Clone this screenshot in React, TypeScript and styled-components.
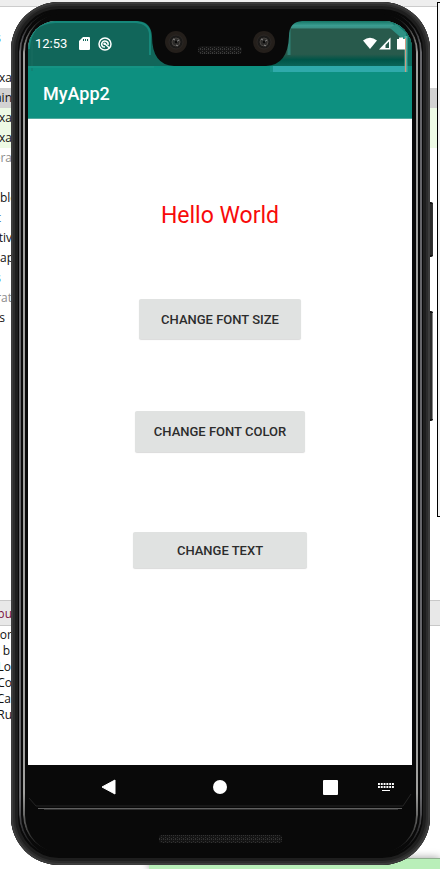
import React, { useState } from "react";
import styled, { createGlobalStyle } from "styled-components";

const GlobalStyle = createGlobalStyle`
  *, *::before, *::after { box-sizing: border-box; }
  body { margin: 0; background: #fff; font-family: Roboto, sans-serif; }
  button { font-family: inherit; border: 0; padding: 0; cursor: pointer; }
`;

const Desktop = styled.div`
  display: grid;
  grid-template: minmax(100vh, auto) / minmax(0, 1fr);
  overflow: hidden;
`;

/* ---------- editor window behind the emulator ---------- */

const Editor = styled.div`
  grid-area: 1 / 1;
  position: relative;
  display: flex;
  flex-direction: column;
  font: 12px/20px "Open Sans", "Noto Sans", sans-serif;
  color: #111;
`;

const TopStrip = styled.div`
  height: 7px;
  flex: none;
  background: #eee;
  border-bottom: 1px solid #ccc;
`;

const Files = styled.ul`
  flex: 1;
  margin: 0;
  padding: 21px 0 0;
  list-style: none;
`;

const Line = styled.li<{ $fill?: string; $ink?: string }>`
  height: 20px;
  background: ${(p) => p.$fill ?? "transparent"};
  color: ${(p) => p.$ink ?? "inherit"};
`;

const Visible = styled.span<{ $width?: number }>`
  display: flex;
  justify-content: ${(p) => (p.$width ? "flex-end" : "flex-start")};
  width: ${(p) => p.$width ?? 12}px;
  white-space: pre;
`;

const OutputHeader = styled.div`
  height: 26px;
  flex: none;
  background: #e8e8e8;
  border: solid #c8c8c8;
  border-width: 1px 0;
  line-height: 26px;
  color: #7a1040;
`;

const Output = styled.ul`
  height: 232px;
  flex: none;
  margin: 0;
  padding: 1px 0 0;
  list-style: none;
  line-height: 16px;
`;

const StatusStrip = styled.div`
  height: 11px;
  flex: none;
  margin-left: 149px;
  background: #b9efb9;
  border-top: 1px solid #8fae8f;
  box-shadow: 0 0 8px rgba(0, 0, 0, 0.4);
`;

const SidePanel = styled.div`
  position: absolute;
  top: 2px;
  right: -1px;
  width: 4px;
  height: 515px;
  background: #f4f4f4;
  border: 1px solid #000;
`;

/* ---------- device ---------- */

const Device = styled.div`
  grid-area: 1 / 1;
  position: relative;
  display: flex;
  flex-direction: column;
  margin: 2px 10px 4px 11px;
  padding: 19px 18px 0 17px;
  border-radius: 48px;
  background: #090909;
  box-shadow: inset 0 0 0 2px #3c3c3c, inset 0 0 0 4px #2c2c2c,
    inset 0 0 0 7px #1e1e1e;
`;

const Rim = styled.div<{ $inset: number; $tone: string; $radius: number }>`
  position: absolute;
  inset: ${(p) => p.$inset}px;
  border: solid ${(p) => p.$tone};
  border-width: 0 2px;
  border-radius: ${(p) => p.$radius}px;
  mask-image: linear-gradient(
    transparent,
    #000 40px,
    #000 calc(100% - 60px),
    transparent
  );
  pointer-events: none;
`;

const SideKey = styled.div<{ $top: number; $length: number; $edge: string }>`
  position: absolute;
  top: ${(p) => p.$top}px;
  right: -3px;
  width: 3px;
  height: ${(p) => p.$length}px;
  background: #2b2b2b;
  border: solid #111;
  border-width: 2px 0;
  border-radius: 0 2px 2px 0;
  box-shadow: inset -1px 0 ${(p) => p.$edge};
`;

const Screen = styled.div`
  flex: 1;
  position: relative;
  display: flex;
  flex-direction: column;
  overflow: hidden;
  border-radius: 28px 28px 0 0;
  background: #fff;
`;

const StatusBar = styled.header`
  height: 45px;
  flex: none;
  display: flex;
  align-items: center;
  padding: 0 7px;
  background: #11665a;
  color: #fff;
  font-size: 13px;
  line-height: 16px;
`;

const StatusIcons = styled.div`
  display: flex;
  align-items: center;
  gap: 8px;
  margin-left: 12px;
`;

const LeftGlow = styled.svg`
  position: absolute;
  top: 0;
  left: 0;
`;

const Notch = styled.svg`
  position: absolute;
  top: 0;
  left: 50%;
  transform: translateX(-50%);
`;

const Glare = styled.svg`
  position: absolute;
  top: 0;
  right: 0;
`;

const AppBar = styled.div`
  height: 53px;
  flex: none;
  display: flex;
  align-items: center;
  padding: 3px 15px 0;
  background: #0d9080;
  border-bottom: 1px solid #51aa9f;
`;

const Title = styled.h1`
  margin: 0;
  color: #fff;
  font-size: 18px;
  line-height: 24px;
  font-weight: 500;
`;

const Main = styled.main`
  flex: 1;
  display: flex;
  flex-direction: column;
  align-items: center;
  padding-top: 83px;
`;

const Greeting = styled.p<{ $large: boolean; $blue: boolean }>`
  margin: 0 0 69px;
  color: ${(p) => (p.$blue ? "#1a56f0" : "#f80a0a")};
  font-size: ${(p) => (p.$large ? 32 : 23)}px;
  line-height: 28px;
`;

const Action = styled.button<{ $width: number; $height: number; $gap: number }>`
  width: ${(p) => p.$width}px;
  height: ${(p) => p.$height}px;
  flex: none;
  margin-bottom: ${(p) => p.$gap}px;
  padding-top: 1px;
  border-radius: 2px;
  background: #e0e2e1;
  box-shadow: 0 1px 1px rgba(0, 0, 0, 0.15);
  color: #2c2c2c;
  font-size: 13px;
  line-height: 16px;
  font-weight: 500;
  text-transform: uppercase;
`;

const NavBar = styled.nav`
  height: 44px;
  flex: none;
  display: grid;
  grid-template-columns:
    minmax(0, 26fr) repeat(3, minmax(0, 111fr))
    minmax(0, 26fr);
  align-items: center;
  justify-items: center;
  background: #090909;

  button:first-child {
    grid-column: 2;
  }
  button:last-child {
    justify-self: end;
    margin-right: 18px;
  }
`;

const NavButton = styled.button`
  display: flex;
  background: none;
  color: #fff;
`;

const Chin = styled.div`
  position: relative;
  height: 56px;
  flex: none;
  display: flex;
  justify-content: center;
  align-items: center;
  padding-top: 4px;
`;

const GlassEdge = styled.svg`
  position: absolute;
  top: -27px;
  left: 0;
  width: 100%;
  height: 30px;
`;

const SpeakerArt = styled.svg`
  display: block;
`;

const files = [
  { text: "s", ink: "#2f8fe0", width: 1 },
  { text: "" },
  { text: "exa", width: 12 },
  { text: "ain", fill: "#d2d2d2", width: 12 },
  { text: "exa", fill: "#edfae5", width: 12 },
  { text: "exa", fill: "#edfae5", width: 12 },
  { text: "era", ink: "#8c8c8c", width: 12 },
  { text: "" },
  { text: "ble" },
  { text: "t", ink: "#3574a8", width: 1 },
  { text: "tiv", width: 12 },
  { text: "ap" },
  { text: "s", ink: "#2f8fe0", width: 1 },
  { text: "rat", ink: "#8c8c8c", width: 12 },
  { text: "s", width: 5 },
];

const output = [
  { text: "tor", width: 12 },
  { text: "b", width: 10 },
  { text: "Lo", width: 11 },
  { text: "Co", width: 12 },
  { text: "Ca", width: 11 },
  { text: "Ru", width: 12 },
];

function Camera({ x }: { x: number }) {
  return (
    <g transform={`translate(${x} 21)`}>
      <circle r="11" fill="#241f1b" />
      <circle r="7" fill="#1b1a19" stroke="#2c2825" />
      <circle r="4" fill="#2c2b2a" stroke="#474441" />
      <path d="M-3 -3l2 1M0 0l3 -2M0 3l2 1" stroke="#888" />
      <circle r="1.2" fill="#080808" />
    </g>
  );
}

const mesh = (id: string, tone: string) => (
  <pattern id={id} width="4" height="4" patternUnits="userSpaceOnUse">
    <rect width="4" height="4" fill="#141414" />
    <path d="M0 0h1v1h-1zM2 2h1v1h-1zM2 0h1v1h-1zM0 3h1v1h-1z" fill={tone} />
  </pattern>
);

export default function App() {
  const [large, setLarge] = useState(false);
  const [blue, setBlue] = useState(false);
  const [bye, setBye] = useState(false);

  return (
    <>
      <GlobalStyle />
      <Desktop>
        <Editor>
          <TopStrip />
          <Files>
            {files.map((f, i) => (
              <Line key={i} $fill={f.fill} $ink={f.ink}>
                <Visible $width={f.width}>{f.text}</Visible>
              </Line>
            ))}
          </Files>
          <OutputHeader>
            <Visible $width={12}>pu</Visible>
          </OutputHeader>
          <Output>
            {output.map((o) => (
              <li key={o.text}>
                <Visible $width={o.width}>{o.text}</Visible>
              </li>
            ))}
          </Output>
          <StatusStrip />
          <SidePanel />
        </Editor>

        <Device>
          <SideKey $top={200} $length={55} $edge="#333" />
          <SideKey $top={309} $length={110} $edge="#888" />
          <Rim $inset={8} $tone="#66666a" $radius={42} />
          <Rim $inset={12} $tone="#a0a09e" $radius={38} />

          <Screen>
            <StatusBar>
              <span>12:53</span>
              <StatusIcons>
                <svg width="11" height="13" viewBox="0 0 11 13">
                  <path d="M4 0h6q1 0 1 1v11q0 1-1 1H1q-1 0-1-1V4z" fill="#fff" />
                  <path d="M4.500 2v2M6.500 2v2M8.500 2v2" stroke="#11665a" />
                </svg>
                <svg width="14" height="14" viewBox="0 0 14 14" fill="none">
                  <circle cx="7" cy="7" r="6" stroke="#fff" strokeWidth="1.500" />
                  <path
                    d="M10 8A3.200 3.200 0 1 0 5 9.800L7 10M6.500 6.500L11.500 11"
                    stroke="#fff"
                    strokeWidth="1.500"
                  />
                  <circle cx="6.500" cy="6.800" r="1.200" fill="#fff" />
                </svg>
              </StatusIcons>
            </StatusBar>
            <AppBar>
              <Title>MyApp2</Title>
            </AppBar>

            <LeftGlow width="126" height="50" fill="none">
              <path
                d="M1 28Q2 1 28 1H108Q121 2 122 13V34"
                stroke="#16877a"
                strokeWidth="2"
              />
              <path d="M4 20V50" stroke="#1d7065" strokeOpacity=".7" />
              <path d="M0 46h126" stroke="#159384" strokeWidth="2" />
            </LeftGlow>

            <Glare width="144" height="51" fill="none">
              <defs>
                <linearGradient id="sheen" x1="0" y1="0" x2="0" y2="1">
                  <stop offset="0" stopColor="#157565" />
                  <stop offset=".1" stopColor="#3a9c90" />
                  <stop offset=".15" stopColor="#3a9186" />
                  <stop offset=".18" stopColor="#285a4c" />
                  <stop offset=".74" stopColor="#285a4c" />
                  <stop offset=".86" stopColor="#005548" />
                  <stop offset="1" stopColor="#0b6659" />
                </linearGradient>
              </defs>
              <path d="M0 0H144V45H0z" fill="url(#sheen)" />
              <path d="M21 8V34" stroke="#2f8075" strokeWidth="3" />
              <path d="M4 45H137V51H4z" fill="#2faaab" />
              <path d="M2 45H5V51H2z" fill="#17958a" />
              <path d="M122 0L144 22V0z" fill="#11796b" />
              <path d="M122 7L138 21V12L128 3z" fill="#2e9184" />
              <path d="M140 17H144V45H140z" fill="#0a6d5f" />
              <path d="M138 15V51" stroke="#4ab0a3" strokeWidth="3" />
              <path d="M137.500 17V51" stroke="#ce9a82" />
              <path d="M95 19.500Q102 14 109 19.500L102 28z" fill="#fff" />
              <path d="M111 28.500L122.500 16.500V28.500z" fill="#fff" />
              <path d="M117.500 24L121 20.500V27H117.500z" fill="#285a4c" />
              <path d="M129 18h2V16.500h4V18h2v10.500h-8z" fill="#fff" />
            </Glare>

            <Notch width="176" height="45">
              <defs>{mesh("earpiece", "#3a3a3a")}</defs>
              <path
                d="M6 0H170Q157 1 157 15Q156 44 134 45H42Q20 44 20 15Q19 1 6 0z"
                fill="#090909"
              />
              <Camera x={44} />
              <Camera x={132} />
              <rect x="66" y="25" width="44" height="8" rx="4" fill="url(#earpiece)" />
            </Notch>

            <Main>
              <Greeting $large={large} $blue={blue}>
                {bye ? "Goodbye World" : "Hello World"}
              </Greeting>
              <Action $width={162} $height={40} $gap={72} onClick={() => setLarge(!large)}>
                Change font size
              </Action>
              <Action $width={170} $height={41} $gap={80} onClick={() => setBlue(!blue)}>
                Change font color
              </Action>
              <Action $width={174} $height={36} $gap={0} onClick={() => setBye(!bye)}>
                Change text
              </Action>
            </Main>

            <NavBar>
              <NavButton aria-label="Back">
                <svg width="16" height="16" viewBox="0 0 16 16">
                  <path
                    d="M14 1V15L1 8z"
                    fill="#fff"
                    stroke="#fff"
                    strokeLinejoin="round"
                  />
                </svg>
              </NavButton>
              <NavButton aria-label="Home">
                <svg width="14" height="14" viewBox="0 0 14 14">
                  <circle cx="7" cy="7" r="7" fill="#fff" />
                </svg>
              </NavButton>
              <NavButton aria-label="Recent apps">
                <svg width="15" height="15" viewBox="0 0 15 15">
                  <rect width="15" height="15" rx="1" fill="#fff" />
                </svg>
              </NavButton>
              <NavButton aria-label="Switch keyboard">
                <svg width="16" height="9" viewBox="0 0 16 9">
                  <path
                    d="M0 1h16M0 4h16"
                    stroke="#fff"
                    strokeWidth="2"
                    strokeDasharray="1.900 .9"
                  />
                  <path d="M4 7.500h8" stroke="#fff" />
                </svg>
              </NavButton>
            </NavBar>
          </Screen>

          <Chin>
            <GlassEdge viewBox="0 0 384 30" preserveAspectRatio="none" fill="none">
              <path
                d="M1 10L8 18H375L383 6"
                transform="translate(0 6)"
                stroke="#242424"
              />
              <path d="M10 26.500H374" stroke="#606060" />
              <path d="M16 27.500H370" stroke="#303030" />
            </GlassEdge>
            <SpeakerArt width="123" height="8">
              <defs>{mesh("speaker", "#333")}</defs>
              <rect width="123" height="8" rx="3" fill="url(#speaker)" />
            </SpeakerArt>
          </Chin>
        </Device>
      </Desktop>
    </>
  );
}
